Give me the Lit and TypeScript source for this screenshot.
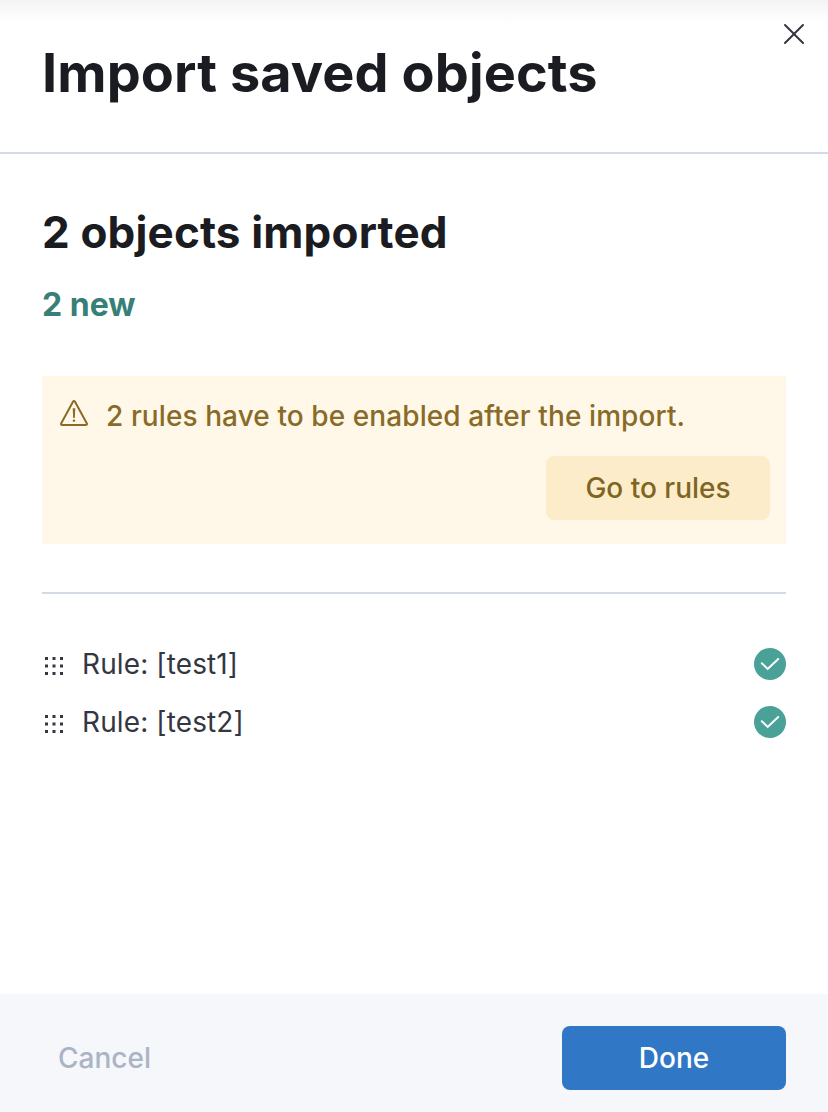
import { LitElement, html, css, svg } from "lit";
import { customElement, state } from "lit/decorators.js";

const closeIcon = svg`<path d="M7.293 8L3.146 3.854a.5.5 0 11.708-.708L8 7.293l4.146-4.147a.5.5 0 01.708.708L8.707 8l4.147 4.146a.5.5 0 01-.708.708L8 8.707l-4.146 4.147a.5.5 0 01-.708-.708L7.293 8z"/>`;
const alertIcon = svg`<path fill-rule="evenodd" d="M7.59 10.059L7.35 5.18h1.3L8.4 10.06h-.81zm.394 1.901a.61.61 0 01-.448-.186.606.606 0 01-.186-.444c0-.174.062-.323.186-.446a.614.614 0 01.448-.184c.169 0 .315.06.44.182.124.122.186.27.186.448a.6.6 0 01-.189.446.607.607 0 01-.437.184zM2 14a1 1 0 01-.878-1.479l6-11a1 1 0 011.756 0l6 11A1 1 0 0114 14H2zm0-1h12L8 2 2 13z"/>`;

@customElement("app-root")
export class AppRoot extends LitElement {
  @state() private rules = ["test1", "test2"];

  static styles = css`
    :host {
      display: flex;
      flex-direction: column;
      height: 1112px;
      box-sizing: border-box;
      background: #fff;
      color: #343741;
      font-family: Inter, "Liberation Sans", sans-serif;
      font-size: 28px;
      overflow: hidden;
    }
    h2, h3, h4, p, ul { margin: 0; padding: 0; }
    button { border: 0; padding: 0; background: none; font: inherit; color: inherit; }
    svg { display: block; fill: currentColor; flex: none; }
    .header {
      display: flex;
      justify-content: space-between;
      align-items: flex-start;
      height: 154px;
      box-sizing: border-box;
      padding: 18px 18px 0 42px;
      border-bottom: 2px solid #d3dae6;
      background: linear-gradient(#f3f3f3, #f9f9f9 9px, #fdfdfd 18px, #fff 26px);
    }
    .title {
      margin-top: 23px;
      font-size: 54px;
      line-height: 64px;
      font-weight: 700;
      letter-spacing: 0.1px;
      color: #1a1c21;
      white-space: nowrap;
    }
    .body { flex: 1; padding: 54px 42px 0; }
    .summary {
      font-size: 44px;
      line-height: 48px;
      font-weight: 700;
      letter-spacing: 0.15px;
      color: #1a1c21;
      white-space: nowrap;
    }
    .new { margin-top: 25px; font-size: 32px; line-height: 48px; font-weight: 700; color: #387f78; }
    .callout {
      display: flex;
      flex-direction: column;
      height: 168px;
      box-sizing: border-box;
      margin-top: 47px;
      padding: 16px;
      background: #fff8e9;
      color: #896b27;
    }
    .message {
      display: flex;
      gap: 16px;
      height: 48px;
      line-height: 48px;
      font-weight: 500;
      letter-spacing: 0.09px;
      white-space: nowrap;
    }
    .alert { margin-top: 6px; }
    .go {
      align-self: flex-end;
      width: 224px;
      height: 64px;
      margin-top: 16px;
      border-radius: 8px;
      background: #fdecc9;
      color: #7f6523;
      font-weight: 500;
    }
    .rule { height: 2px; margin: 48px 0; background: #d3dae6; }
    .list { display: flex; flex-direction: column; gap: 16px; list-style: none; }
    .row { display: flex; align-items: center; height: 42px; }
    .row:first-child { margin-top: 1px; }
    .grip { margin: 4px 16px 0 0; }
    .name { flex: 1; letter-spacing: 0.12px; }
    .check { color: #4aa198; }
    .footer {
      display: flex;
      justify-content: space-between;
      align-items: center;
      height: 118px;
      box-sizing: border-box;
      padding: 10px 42px 0 58px;
      background: #f5f7fb;
      font-weight: 500;
    }
    .cancel { color: #abb4c4; }
    .done { width: 224px; height: 64px; border-radius: 8px; background: #3077c5; color: #fff; }
  `;

  private grip() {
    const at = [3, 10.5, 18];
    return html`<svg class="grip" width="24" height="24" viewBox="0 0 24 24">
      ${at.map((y) => at.map((x) => svg`<rect x=${x} y=${y} width="3" height="3"/>`))}
    </svg>`;
  }

  render() {
    return html`
      <header class="header">
        <h2 class="title">Import saved objects</h2>
        <button class="close" aria-label="Close">
          <svg width="32" height="32" viewBox="0 0 16 16">${closeIcon}</svg>
        </button>
      </header>
      <main class="body">
        <h3 class="summary">2 objects imported</h3>
        <h4 class="new">2 new</h4>
        <section class="callout">
          <div class="message">
            <svg class="alert" width="32" height="32" viewBox="0 0 16 16">${alertIcon}</svg>
            <p>2 rules have to be enabled after the import.</p>
          </div>
          <button class="go">Go to rules</button>
        </section>
        <div class="rule"></div>
        <ul class="list">
          ${this.rules.map(
            (r) => html`<li class="row">
              ${this.grip()}
              <span class="name">Rule: [${r}]</span>
              <svg class="check" width="32" height="32" viewBox="0 0 32 32">
                <circle cx="16" cy="16" r="16" />
                <path d="M7.8 15.3l5.9 5.6L24.2 11" fill="none" stroke="#fff" stroke-width="2" stroke-linecap="round" />
              </svg>
            </li>`
          )}
        </ul>
      </main>
      <footer class="footer">
        <button class="cancel">Cancel</button>
        <button class="done">Done</button>
      </footer>
    `;
  }
}
